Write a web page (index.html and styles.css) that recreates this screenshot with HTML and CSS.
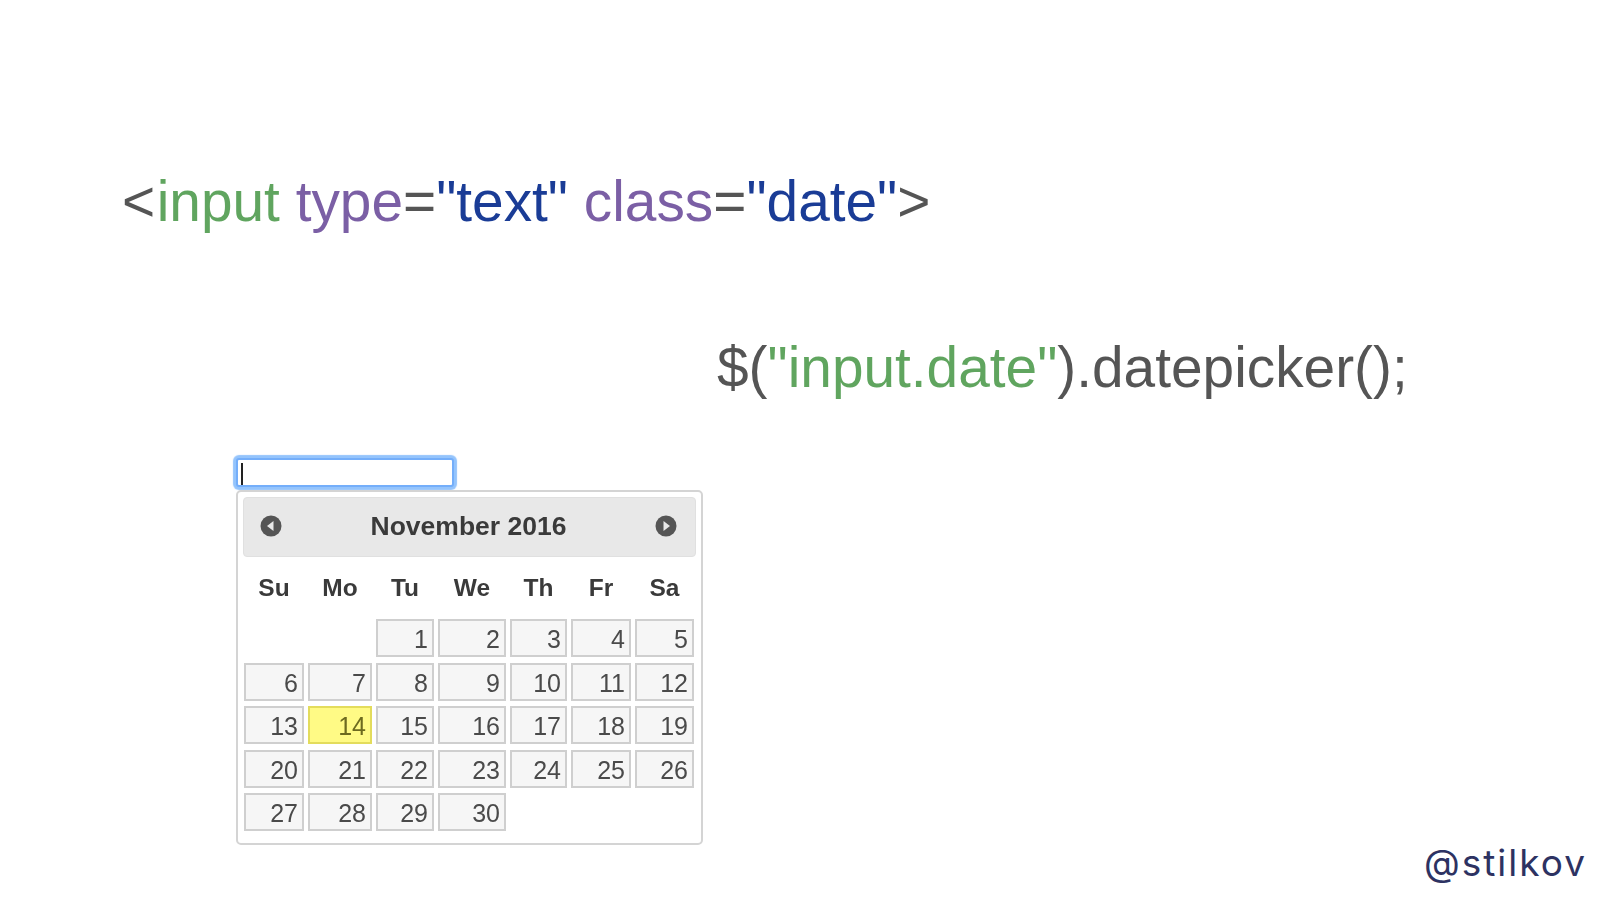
FILE: index.html
```html
<!DOCTYPE html>
<html lang="en">
<head>
<meta charset="utf-8">
<title>Datepicker</title>
<link rel="stylesheet" href="styles.css">
</head>
<body>
<main class="slide">
  <div class="code code-html"><span class="lt">&lt;</span><span class="tag">input</span> <span class="attr">type</span><span class="punct">=</span><span class="val">"text"</span> <span class="attr">class</span><span class="punct">=</span><span class="val">"date"</span><span class="punct">&gt;</span></div>
  <div class="code code-js"><span class="punct">$(</span><span class="tag">"input.date"</span><span class="punct">).datepicker();</span></div>
  <section class="demo">
    <div class="field"><span class="caret"></span></div>
    <div class="picker">
      <header class="picker-head">
        <svg class="nav" viewBox="0 0 22 22"><circle cx="11" cy="11" r="10.5" fill="#555"/><path d="M13.5 6v10L7 11z" fill="#e8e8e8"/></svg>
        <span class="month">November 2016</span>
        <svg class="nav" viewBox="0 0 22 22"><circle cx="11" cy="11" r="10.5" fill="#555"/><path d="M8.500 6v10l6.500-5z" fill="#e8e8e8"/></svg>
      </header>
      <div class="grid">
        <div class="dow">Su</div><div class="dow">Mo</div><div class="dow">Tu</div><div class="dow">We</div><div class="dow">Th</div><div class="dow">Fr</div><div class="dow">Sa</div>
        <div class="empty"></div><div class="empty"></div><div class="day">1</div><div class="day">2</div><div class="day">3</div><div class="day">4</div><div class="day">5</div>
        <div class="day">6</div><div class="day">7</div><div class="day">8</div><div class="day">9</div><div class="day">10</div><div class="day">11</div><div class="day">12</div>
        <div class="day">13</div><div class="day today">14</div><div class="day">15</div><div class="day">16</div><div class="day">17</div><div class="day">18</div><div class="day">19</div>
        <div class="day">20</div><div class="day">21</div><div class="day">22</div><div class="day">23</div><div class="day">24</div><div class="day">25</div><div class="day">26</div>
        <div class="day">27</div><div class="day">28</div><div class="day">29</div><div class="day">30</div>
      </div>
    </div>
  </section>
  <footer class="handle">@stilkov</footer>
</main>
</body>
</html>
```
FILE: styles.css
```css
html, body {
  margin: 0;
  padding: 0;
  background: #fff;
}
.slide {
  width: 1600px;
  height: 900px;
  position: relative;
  overflow: hidden;
  font-family: "Liberation Sans", Arial, sans-serif;
}
.code {
  font-size: 56.800px;
  line-height: 64px;
  white-space: pre;
  color: #555;
  filter: blur(0.3px);
}
.code-html {
  padding: 170px 0 0 122px;
}
.code-js {
  padding: 102px 0 0 717px;
}
.punct { color: #555; }
.lt { color: #555; letter-spacing: 1.500px; }
.tag { color: #60a55f; }
.attr { color: #7b5fa5; }
.val { color: #1a3c96; }
.demo {
  margin: 58px 0 0 236px;
  width: 467px;
  filter: blur(0.4px);
}
.field {
  width: 211px;
  height: 25px;
  background: #fff;
  border: 2px solid #74aefa;
  border-radius: 3px;
  box-shadow: 0 0 1px 3px #94c4fc;
  display: flex;
  align-items: center;
  padding-left: 3px;
}
.caret {
  width: 1.500px;
  height: 22px;
  margin-top: 3px;
  background: #222;
}
.picker {
  box-sizing: border-box;
  width: 467px;
  height: 355px;
  margin-top: 3px;
  background: #fff;
  border: 2px solid #d4d4d4;
  border-radius: 5px;
  padding: 5px 5px 0 5px;
  color: #333;
}
.picker-head {
  height: 60px;
  box-sizing: border-box;
  background: #e8e8e8;
  border: 1px solid #e0e0e0;
  border-radius: 4px;
  display: flex;
  align-items: center;
  justify-content: space-between;
  padding: 0 18px 2px 16px;
}
.nav {
  width: 22px;
  height: 22px;
  flex: none;
}
.month {
  font-size: 26.500px;
  font-weight: 700;
  color: #3a3a3a;
}
.grid {
  display: grid;
  grid-template-columns: 60px 64px 58px 68px 57px 60px 59px;
  grid-template-rows: 45.500px;
  grid-auto-rows: 38px;
  column-gap: 4px;
  row-gap: 5.500px;
  margin: 11px 0 0 1px;
  font-size: 25px;
}
.dow {
  font-weight: 700;
  text-align: center;
  color: #3a3a3a;
  line-height: 40px;
  font-size: 24.500px;
}
.day {
  box-sizing: border-box;
  background: #f6f6f6;
  border: 2px solid #cfcfcf;
  text-align: right;
  padding-right: 4px;
  line-height: 36px;
  color: #4a4a4a;
}
.today {
  background: #fffa85;
  border-color: #e3dc5c;
  color: #6d6a1f;
}
.handle {
  position: absolute;
  right: 13px;
  bottom: 15px;
  font-family: Inter, sans-serif;
  font-size: 37px;
  letter-spacing: 2px;
  color: #2d3262;
}
```
